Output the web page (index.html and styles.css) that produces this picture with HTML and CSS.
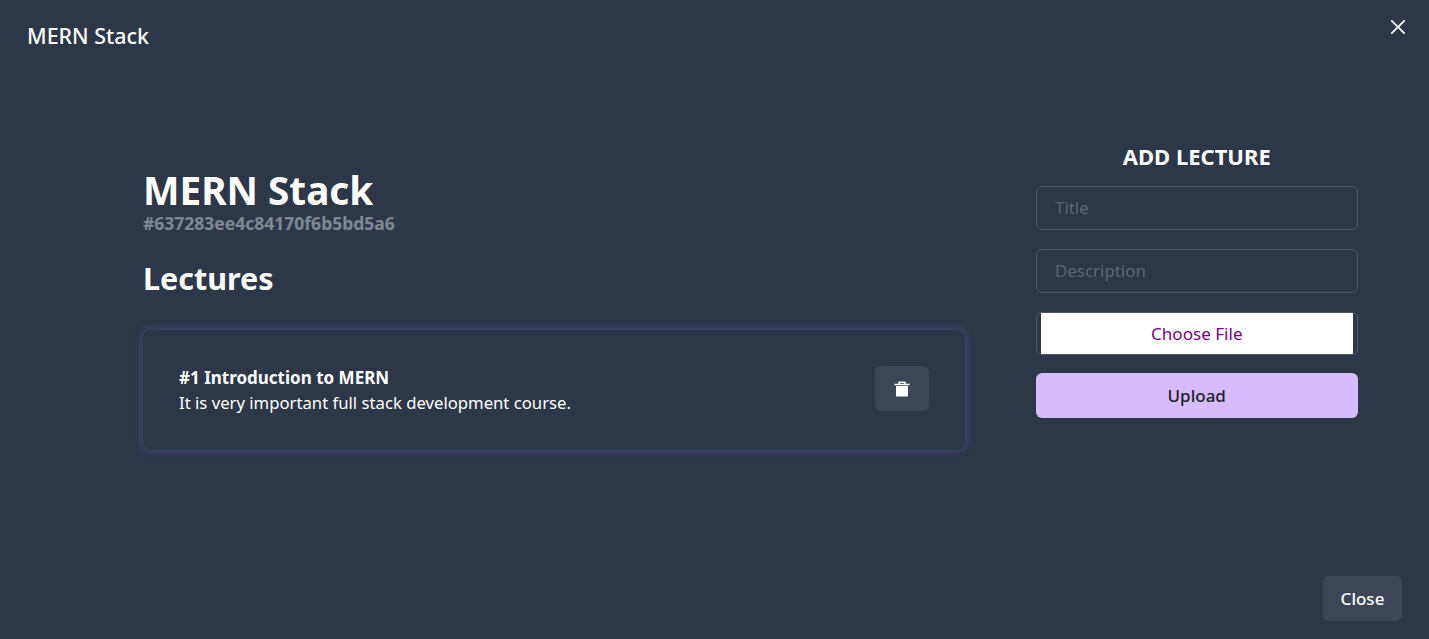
FILE: index.html
```html
<!DOCTYPE html>
<html lang="en">
<head>
<meta charset="utf-8">
<title>MERN Stack</title>
<link rel="stylesheet" href="styles.css">
</head>
<body>
<section class="modal">
  <header class="modal-header">
    <span class="modal-title">MERN Stack</span>
    <button class="icon-close" aria-label="Close">
      <svg viewBox="0 0 24 24" width="14" height="14"><path fill="currentColor" d="M.439,21.44a1.5,1.5,0,0,0,2.122,2.121L11.823,14.3a.25.25,0,0,1,.354,0l9.262,9.263a1.5,1.5,0,1,0,2.122-2.121L14.3,12.177a.25.25,0,0,1,0-.354l9.263-9.262A1.5,1.5,0,0,0,21.439.44L12.177,9.7a.25.25,0,0,1-.354,0L2.561.44A1.5,1.5,0,0,0,.439,2.561L9.7,11.823a.25.25,0,0,1,0,.354Z"/></svg>
    </button>
  </header>
  <main class="modal-body">
    <div class="course">
      <h1 class="course-name">MERN Stack</h1>
      <p class="course-id">#637283ee4c84170f6b5bd5a6</p>
      <h2 class="lectures-heading">Lectures</h2>
      <article class="lecture-card">
        <div class="lecture-text">
          <h3 class="lecture-title">#1 Introduction to MERN</h3>
          <p class="lecture-desc">It is very important full stack development course.</p>
        </div>
        <button class="delete-btn" aria-label="Delete">
          <svg viewBox="0 0 24 24" width="18" height="18"><path fill="currentColor" d="M4 8h16v13a1 1 0 0 1-1 1H5a1 1 0 0 1-1-1V8zm3-3V3a1 1 0 0 1 1-1h8a1 1 0 0 1 1 1v2h5v2H2V5h5zm2-1v1h6V4H9z"/></svg>
        </button>
      </article>
    </div>
    <form class="add-form">
      <h2 class="form-heading">ADD LECTURE</h2>
      <input class="field" type="text" placeholder="Title">
      <input class="field" type="text" placeholder="Description">
      <input class="file-field" type="file">
      <button class="upload-btn" type="button">Upload</button>
    </form>
  </main>
  <footer class="modal-footer">
    <button class="close-btn">Close</button>
  </footer>
</section>
</body>
</html>
```
FILE: styles.css
```css
* { box-sizing: border-box; }
html, body { margin: 0; height: 100%; }
body {
  background: #2d3748;
  color: #fff;
  font-family: "Noto Sans", "Open Sans", sans-serif;
  overflow: hidden;
}
button { font-family: inherit; border: 0; cursor: pointer; }
h1, h2, h3, p { margin: 0; }

.modal { height: 639px; display: flex; flex-direction: column; }

.modal-header {
  display: flex;
  justify-content: space-between;
  height: 72px;
  padding: 22px 24px 0 27px;
}
.modal-title { font-size: 21.4px; font-weight: 500; line-height: 28px; }
.icon-close {
  background: none;
  color: #fff;
  padding: 0;
  width: 14px;
  height: 14px;
  margin: -2px 0 0;
  display: flex;
}

.modal-body {
  flex: 1;
  display: grid;
  grid-template-columns: 822px 321.5px;
  column-gap: 71px;
  padding: 0 0 0 143px;
}

.course { padding-top: 95px; }
.course-name { font-size: 38.7px; line-height: 46px; font-weight: 700; }
.course-id { font-size: 17.5px; line-height: 22px; font-weight: 700; opacity: .4; margin-top: -1px; }
.lectures-heading { font-size: 30.5px; line-height: 40px; font-weight: 700; margin-top: 24px; }

.lecture-card {
  display: flex;
  align-items: center;
  justify-content: space-between;
  margin-top: 32px;
  height: 120px;
  padding: 0 36px;
  border-radius: 8px;
  box-shadow: 0 0 10px rgba(128, 90, 213, .5);
}
.lecture-title { font-size: 17px; line-height: 25px; font-weight: 700; }
.lecture-desc { font-size: 16.7px; line-height: 25px; }
.delete-btn {
  width: 54px;
  height: 45px;
  margin-bottom: 3px;
  border-radius: 6px;
  background: rgba(255, 255, 255, .08);
  color: #fff;
  display: flex;
  align-items: center;
  justify-content: center;
}

.add-form { display: flex; flex-direction: column; padding-top: 68.5px; }
.form-heading { font-size: 22px; line-height: 30px; font-weight: 700; text-align: center; margin-bottom: 15px; }
.field {
  height: 44.5px;
  margin-bottom: 18.5px;
  padding: 0 18px;
  border: 1px solid rgba(255, 255, 255, .16);
  border-radius: 6px;
  background: transparent;
  color: #fff;
  font: inherit;
  font-size: 16.9px;
  outline: 0;
}
.field::placeholder { color: rgba(255, 255, 255, .24); }
.file-field {
  display: block;
  width: 100%;
  height: 43.5px;
  margin-bottom: 18px;
  padding: 0 4px;
  overflow: hidden;
  border: 1px solid rgba(255, 255, 255, .16);
  border-radius: 6px;
  font: inherit;
  color: transparent;
}
.file-field::file-selector-button {
  width: 100%;
  height: 41.5px;
  margin: 0;
  border: 0;
  background: #fff;
  color: #800080;
  font-family: inherit;
  font-size: 17.1px;
}
.upload-btn {
  height: 45px;
  border-radius: 6px;
  background: #d6bcfa;
  color: #1a202c;
  font-size: 17px;
  font-weight: 500;
}

.modal-footer { display: flex; justify-content: flex-end; padding: 0 27px 18px 0; }
.close-btn {
  width: 79px;
  height: 45px;
  border-radius: 6px;
  background: rgba(255, 255, 255, .08);
  color: #fff;
  font-size: 17px;
  font-weight: 500;
}
```
